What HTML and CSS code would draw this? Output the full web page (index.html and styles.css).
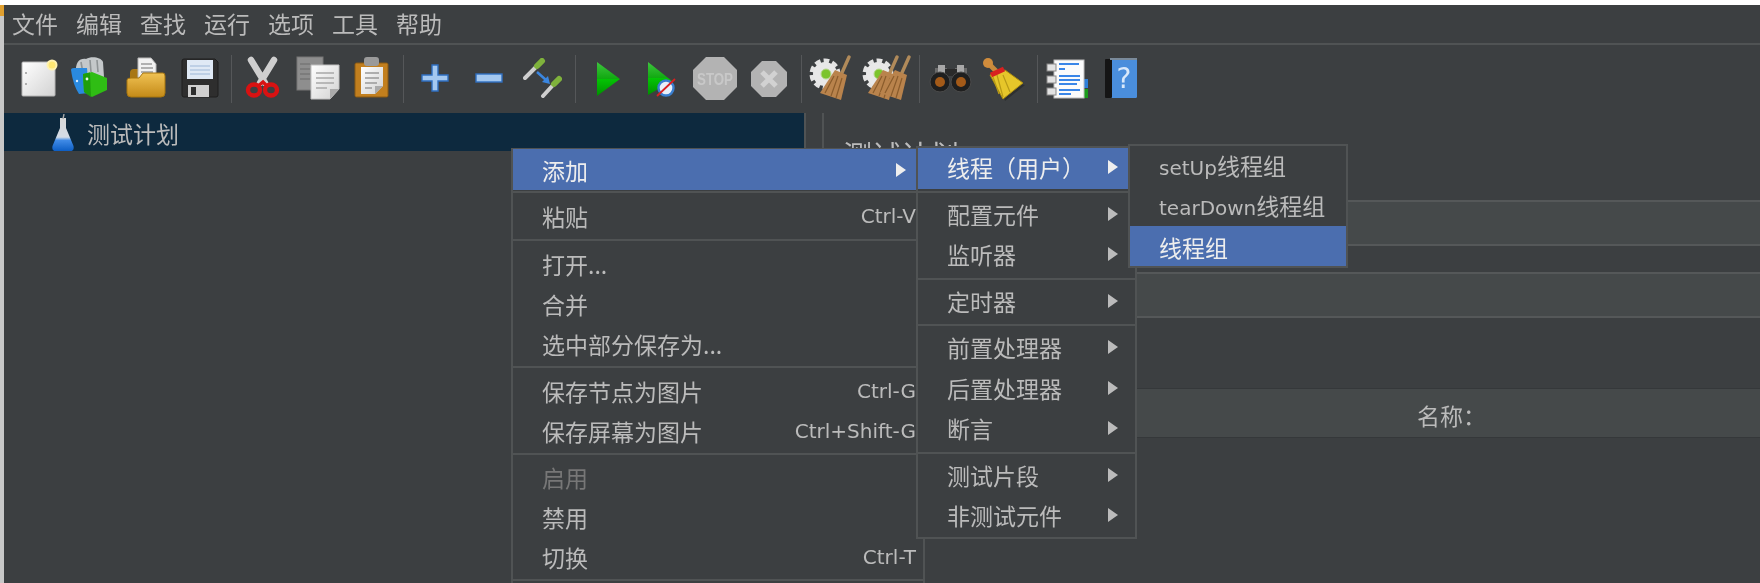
FILE: index.html
```html
<!DOCTYPE html>
<html lang="zh">
<head>
<meta charset="utf-8">
<title>JMeter</title>
<link rel="stylesheet" href="styles.css">
</head>
<body>
<svg class="defs" aria-hidden="true">
  <defs>
    <linearGradient id="paper" x1="0" y1="0" x2="1" y2="1"><stop offset="0" stop-color="#ffffff"/><stop offset="1" stop-color="#d2d2d2"/></linearGradient>
    <linearGradient id="folder" x1="0" y1="0" x2="0" y2="1"><stop offset="0" stop-color="#f0c254"/><stop offset="1" stop-color="#c48a18"/></linearGradient>
    <linearGradient id="green" x1="0" y1="0" x2="0" y2="1"><stop offset="0" stop-color="#3fc43f"/><stop offset=".5" stop-color="#0fa80f"/><stop offset=".5" stop-color="#04c404"/><stop offset="1" stop-color="#008f00"/></linearGradient>
    <linearGradient id="flask" x1="0" y1="0" x2="0" y2="1"><stop offset="0" stop-color="#d8d8d8"/><stop offset=".58" stop-color="#d4dce6"/><stop offset=".68" stop-color="#3f8ae6"/><stop offset="1" stop-color="#0d5ec4"/></linearGradient>
    <g id="gear">
      <circle cx="18" cy="19" r="13" fill="none" stroke="#e4e4e4" stroke-width="5" stroke-dasharray="5.5 3"/>
      <circle cx="18" cy="19" r="12" fill="#e8e8e8"/>
      <circle cx="19" cy="19" r="5" fill="#7cc42c" stroke="#b9d890"/>
    </g>
    <g id="besom">
      <path d="M42 2 L34 20" stroke="#b08a5a" stroke-width="3.4" stroke-linecap="round"/>
      <path d="M28 15 L40 20 L34 45 L13 38 Z" fill="#b9834c"/>
      <path d="M31 21 L24 41 M35 23 L29 43 M27 21 L18 38" stroke="#8a5c2c" stroke-width="1.2"/>
    </g>
  </defs>
</svg>
<div class="app">
  <div class="top-gap"></div>
  <div class="window">
    <div class="edge"><div class="edge-mark"></div></div>
    <div class="main">
      <nav class="menubar">
        <span>文件</span><span>编辑</span><span>查找</span><span>运行</span><span>选项</span><span>工具</span><span>帮助</span>
      </nav>
      <div class="toolbar">
        <svg class="tool" viewBox="0 0 54 48"><rect x="11" y="7" width="33" height="34" rx="1" fill="url(#paper)" stroke="#b5b5b5"/><circle cx="15" cy="18" r="1" fill="#999"/><circle cx="15" cy="29" r="1" fill="#999"/><circle cx="41" cy="10" r="4.5" fill="#ffe873" stroke="#fff2b0" stroke-width="2"/></svg>
        <svg class="tool" viewBox="0 0 54 48"><path d="M11 18 C10 7 15 3 21 4 C26 1 36 2 38 7 L39 22 L12 24 Z" fill="#c4c8ca"/><path d="M16 7 L18 18 M25 5 L26 17 M32 5 L33 17" stroke="#8f9496" stroke-width="1.6"/><path d="M6 15 Q6 13 9 13 L22 13 L24 38 L14 39 Q8 30 6 15 Z" fill="#2a8ae0"/><path d="M18 19 L27 17 L42 23 L42 35 L27 42 L19 37 Z" fill="#2fbd14"/><path d="M18 19 L25 17.5 L26 42 L19 37 Z" fill="#1f9e0c"/><circle cx="22" cy="24" r="1.4" fill="#e8f8e8"/><circle cx="12" cy="26" r="1.2" fill="#d8ecff"/></svg>
        <svg class="tool" viewBox="0 0 54 48"><path d="M11 18 Q11 14 15 14 L22 14 L22 18 L44 18 L44 30 L11 30 Z" fill="#a87716"/><path d="M19 3 L32 3 L37 9 L37 24 L19 24 Z" fill="#f1f1f1" stroke="#b8b8b8"/><path d="M22 9 H33 M22 13 H34 M22 17 H34" stroke="#9a9a9a" stroke-width="1.4"/><path d="M8 25 Q8 23 12 23 L20 23 L24 18 L44 18 Q46 18 46 21 L46 38 Q46 42 42 42 L12 42 Q8 42 8 38 Z" fill="url(#folder)" stroke="#a8760f"/></svg>
        <svg class="tool" viewBox="0 0 54 48"><path d="M9 6 Q9 4 11 4 L42 4 L45 7 L45 40 Q45 42 43 42 L11 42 Q9 42 9 40 Z" fill="#2e2e2e" stroke="#1e1e1e"/><rect x="14" y="5" width="26" height="19" fill="#dfe9f5"/><path d="M17 11 H37 M17 15 H37 M17 19 H37" stroke="#9db8d8" stroke-width="1.2"/><rect x="15" y="30" width="21" height="12" fill="#d0d0d0"/><rect x="18" y="32" width="5" height="8" fill="#2e2e2e"/></svg>
        <span class="tool-sep"></span>
        <svg class="tool" viewBox="0 0 54 48"><path d="M14 5 L28 28 M37 5 L23 28" stroke="#cfcfcf" stroke-width="6.5" stroke-linecap="round" fill="none"/><ellipse cx="17" cy="35" rx="6" ry="5.5" fill="none" stroke="#d81212" stroke-width="4.4"/><ellipse cx="34" cy="35" rx="6" ry="5.5" fill="none" stroke="#d81212" stroke-width="4.4"/><path d="M21 31 L26 27 L30 31" stroke="#d81212" stroke-width="3.4" fill="none"/></svg>
        <svg class="tool" viewBox="0 0 54 48"><rect x="6" y="2" width="26" height="33" fill="#8e8e8e" stroke="#777"/><path d="M9 9 H19 M9 14 H19 M9 19 H19 M9 24 H19" stroke="#777" stroke-width="1.4"/><path d="M20 10 L48 10 L48 34 L39 44 L20 44 Z" fill="url(#paper)" stroke="#c0c0c0"/><path d="M48 34 L39 34 L39 44 Z" fill="#aaa"/><path d="M25 18 H43 M25 23 H43 M25 28 H43 M25 33 H36" stroke="#a8a8a8" stroke-width="1.4"/></svg>
        <svg class="tool" viewBox="0 0 54 48"><rect x="10" y="8" width="33" height="34" rx="1.5" fill="#c27f1e" stroke="#8a5a12"/><rect x="19" y="2" width="15" height="9" rx="3" fill="#9a9a9a"/><path d="M16 12 H38 V31 L30 39 H16 Z" fill="url(#paper)"/><path d="M38 31 H30 V39 Z" fill="#aaa"/><path d="M20 18 H34 M20 23 H34 M20 28 H32 M20 33 H27" stroke="#999" stroke-width="1.4"/></svg>
        <span class="tool-sep"></span>
        <svg class="tool" viewBox="0 0 54 48"><path d="M23 10 H29 V20 H39 V26 H29 V36 H23 V26 H13 V20 H23 Z" fill="#a4c8f0" stroke="#2f6fc0" stroke-width="1.4"/></svg>
        <svg class="tool" viewBox="0 0 54 48"><rect x="13" y="19" width="26" height="8" fill="#a4c8f0" stroke="#2f6fc0" stroke-width="1.4"/></svg>
        <svg class="tool" viewBox="0 0 54 48"><path d="M8 23 L20 11" stroke="#cfcfcf" stroke-width="4" stroke-linecap="round"/><path d="M20 11 L25 6" stroke="#7fb23c" stroke-width="6" stroke-linecap="round"/><path d="M26 41 L37 29" stroke="#cfcfcf" stroke-width="4" stroke-linecap="round"/><path d="M37 29 L42 24" stroke="#7fb23c" stroke-width="6" stroke-linecap="round"/><path d="M20 17 L29 25" stroke="#3a86e0" stroke-width="2.4"/><path d="M33 29 L25 27 L31 21 Z" fill="#3a86e0"/></svg>
        <span class="tool-sep"></span>
        <svg class="tool" viewBox="0 0 54 48"><path d="M16 7 L39 24 L16 41 Z" fill="url(#green)"/></svg>
        <svg class="tool" viewBox="0 0 54 48"><path d="M13 7 L37 26 L13 40 Z" fill="url(#green)"/><circle cx="31" cy="33" r="7.5" fill="#e8f0fa" stroke="#3a7fd0" stroke-width="2.4"/><path d="M22 41 L40 24" stroke="#d82020" stroke-width="1.8"/></svg>
        <svg class="tool" viewBox="0 0 54 48"><path d="M17 2 H35 L48 15 V32 L35 45 H17 L4 32 V15 Z" fill="#b3b3b3"/><text class="stop-label" x="8" y="29.5" textLength="36" lengthAdjust="spacingAndGlyphs">STOP</text></svg>
        <svg class="tool" viewBox="0 0 54 48"><path d="M19 6 H33 L44 17 V31 L33 42 H19 L8 31 V17 Z" fill="#b3b3b3"/><path d="M19 17 L33 31 M33 17 L19 31" stroke="#d2d2d2" stroke-width="5"/></svg>
        <span class="tool-sep"></span>
        <svg class="tool" viewBox="0 0 54 48"><use href="#gear"/><use href="#besom"/></svg>
        <svg class="tool" viewBox="0 0 54 48"><use href="#gear" x="-1"/><use href="#besom" x="-6"/><use href="#besom" x="6"/></svg>
        <span class="tool-sep"></span>
        <svg class="tool" viewBox="0 0 54 48"><rect x="10" y="13" width="12" height="6" fill="#6b6b6b"/><rect x="30" y="13" width="12" height="6" fill="#6b6b6b"/><rect x="13" y="10" width="7" height="8" fill="#a8a8a8"/><rect x="32" y="10" width="7" height="8" fill="#a8a8a8"/><rect x="20" y="14" width="12" height="7" fill="#2a2a2a"/><circle cx="15" cy="27" r="10" fill="#1f1f1f" stroke="#4a4a4a"/><circle cx="36" cy="27" r="10" fill="#1f1f1f" stroke="#4a4a4a"/><circle cx="15" cy="27" r="5" fill="#a45a18"/><circle cx="36" cy="27" r="5" fill="#a45a18"/></svg>
        <svg class="tool" viewBox="0 0 54 48"><path d="M16 18 L23 25 L44 28 L24 44 Z" fill="#000" opacity=".25" transform="translate(2 2)"/><path d="M11 20 L26 15 L44 28 L24 44 Z" fill="#e6c62a" stroke="#a88a10"/><path d="M18 20 L24 42 M24 20 L31 37 M14 22 L20 39" stroke="#b89a18" stroke-width="1.2"/><path d="M9 8 L19 18" stroke="#c98a3c" stroke-width="5"/><circle cx="9" cy="8" r="5" fill="#d08c3c"/><path d="M12 20 L25 14" stroke="#d82020" stroke-width="5"/></svg>
        <span class="tool-sep"></span>
        <svg class="tool" viewBox="0 0 54 48"><rect x="41" y="24" width="4" height="9" fill="#2f7fd8"/><rect x="41" y="34" width="4" height="9" fill="#1c9c1c"/><rect x="11" y="5" width="30" height="38" fill="#fbfbfb" stroke="#bdbdbd"/><rect x="4" y="9" width="9" height="7" fill="#e2e2e2" stroke="#888"/><rect x="4" y="21" width="9" height="7" fill="#e2e2e2" stroke="#888"/><rect x="4" y="33" width="9" height="7" fill="#e2e2e2" stroke="#888"/><path d="M16 9 H36 M16 14 H22 M16 21 H37 M16 25 H37 M16 29 H34 M16 35 H37 M16 39 H28" stroke="#3a86e8" stroke-width="2"/></svg>
        <svg class="tool" viewBox="0 0 54 48"><rect x="13" y="3" width="27" height="40" rx="1.5" fill="#4a8edc"/><rect x="8" y="4" width="7" height="39" rx="1" fill="#151515"/><rect x="13" y="3" width="27" height="2" fill="#7a8a9a"/><text class="help-label" x="27" y="33">?</text></svg>
      </div>
      <div class="content">
        <aside class="tree">
          <div class="tree-row">
            <svg class="flask" viewBox="0 0 22 38"><path d="M8 4 L14 4 L14 14 L21.5 32 Q22.5 37 18 37 L4 37 Q-0.5 37 0.5 32 L8 14 Z" fill="url(#flask)"/><path d="M12 0 L11 5" stroke="#aaa" stroke-width="1.4"/></svg>
            <span class="tree-label">测试计划</span>
          </div>
        </aside>
        <div class="splitter"></div>
        <section class="detail">
          <h1 class="detail-title">测试计划</h1>
          <div class="band band-one"></div>
          <div class="band band-two"></div>
          <div class="table-head"><span>名称：</span></div>
        </section>
      </div>
    </div>
  </div>

  <div class="menu menu-root">
    <div class="item active first"><span>添加</span><i class="arrow"></i></div>
    <div class="sep"></div>
    <div class="item"><span>粘贴</span><span class="lat">Ctrl-V</span></div>
    <div class="sep sep-tall"></div>
    <div class="item"><span>打开...</span></div>
    <div class="item"><span>合并</span></div>
    <div class="item"><span>选中部分保存为...</span></div>
    <div class="sep"></div>
    <div class="item"><span>保存节点为图片</span><span class="lat">Ctrl-G</span></div>
    <div class="item"><span>保存屏幕为图片</span><span class="lat">Ctrl+Shift-G</span></div>
    <div class="sep sep-short"></div>
    <div class="item disabled"><span>启用</span></div>
    <div class="item"><span>禁用</span></div>
    <div class="item"><span>切换</span><span class="lat">Ctrl-T</span></div>
    <div class="sep"></div>
  </div>

  <div class="menu menu-add">
    <div class="item active"><span>线程（用户）</span><i class="arrow"></i></div>
    <div class="sep"></div>
    <div class="item"><span>配置元件</span><i class="arrow"></i></div>
    <div class="item"><span>监听器</span><i class="arrow"></i></div>
    <div class="sep"></div>
    <div class="item"><span>定时器</span><i class="arrow"></i></div>
    <div class="sep"></div>
    <div class="item"><span>前置处理器</span><i class="arrow"></i></div>
    <div class="item"><span>后置处理器</span><i class="arrow"></i></div>
    <div class="item"><span>断言</span><i class="arrow"></i></div>
    <div class="sep"></div>
    <div class="item"><span>测试片段</span><i class="arrow"></i></div>
    <div class="item"><span>非测试元件</span><i class="arrow"></i></div>
  </div>

  <div class="menu menu-thread">
    <div class="item"><span><span class="lat">setUp</span>线程组</span></div>
    <div class="item"><span><span class="lat">tearDown</span>线程组</span></div>
    <div class="item active"><span>线程组</span></div>
  </div>
</div>
</body>
</html>
```
FILE: styles.css
```css
html, body {
  margin: 0;
  height: 583px;
  overflow: hidden;
  background: #ffffff;
}

.defs {
  position: absolute;
  width: 0;
  height: 0;
}

.app {
  position: relative;
  width: 1760px;
  height: 583px;
  display: flex;
  flex-direction: column;
  overflow: hidden;
  font-family: "Noto Sans CJK SC", sans-serif;
  font-size: 23px;
  color: #bbbbbb;
  filter: blur(0.35px);
}

.top-gap {
  height: 5px;
  flex: none;
}

.window {
  flex: 1;
  display: flex;
  min-height: 0;
}

.edge {
  width: 4px;
  flex: none;
  background: #c8c8c8;
}

.edge-mark {
  height: 11px;
  background: #e0a030;
}

.main {
  flex: 1;
  min-width: 0;
  display: flex;
  flex-direction: column;
  background: #3c3f41;
}

.menubar {
  height: 36px;
  flex: none;
  display: flex;
  align-items: center;
  gap: 18px;
  padding: 0 0 2px 8px;
  border-bottom: 2px solid #505354;
  line-height: 36px;
}

.toolbar {
  height: 68px;
  flex: none;
  display: flex;
  align-items: center;
  padding-left: 7px;
}

.tool {
  width: 54px;
  height: 48px;
  flex: none;
  filter: blur(0.7px);
}

.tool-sep {
  width: 1px;
  height: 48px;
  flex: none;
  margin: 0 5px 0 4px;
  background: #555759;
}

.stop-label {
  font-family: "Liberation Sans", sans-serif;
  font-size: 16px;
  font-weight: 700;
  fill: #c8c8c8;
}

.help-label {
  font-family: "DejaVu Sans", sans-serif;
  font-size: 28px;
  fill: #d8e8fa;
  text-anchor: middle;
}

.content {
  flex: 1;
  min-height: 0;
  display: flex;
}

.tree {
  width: 800px;
  flex: none;
}

.tree-row {
  height: 38px;
  display: flex;
  align-items: center;
  gap: 13px;
  padding-left: 48px;
  background: #0d293e;
  line-height: 38px;
}

.tree-label {
  padding-top: 2px;
  line-height: 36px;
}

.flask {
  width: 22px;
  height: 38px;
  flex: none;
  margin-top: 2px;
}

.splitter {
  width: 16px;
  flex: none;
  border-left: 2px solid #505354;
}

.detail {
  flex: 1;
  min-width: 0;
  border-left: 2px solid #505354;
}

.detail-title {
  margin: 20px 0 0 19px;
  height: 42px;
  font-size: 29px;
  font-weight: 400;
  line-height: 42px;
}

.band {
  height: 42px;
  background: #45494a;
  border-top: 2px solid #555859;
  border-bottom: 2px solid #555859;
}

.band-one {
  margin-top: 25px;
}

.band-two {
  margin-top: 26px;
}

.table-head {
  margin-top: 70px;
  height: 48px;
  display: flex;
  align-items: center;
  padding-left: 593px;
  background: #45494a;
  border-top: 1px solid #35383a;
  border-bottom: 1px solid #35383a;
}

.table-head span {
  padding-top: 4px;
}

.menu {
  position: absolute;
  display: flex;
  flex-direction: column;
  box-sizing: border-box;
  background: #3c3f41;
  border: 2px solid #505354;
}

.menu-root {
  left: 511px;
  top: 148px;
  width: 414px;
  border-top-width: 1px;
  z-index: 1;
}

.menu-add {
  left: 916px;
  top: 146px;
  width: 221px;
  z-index: 2;
}

.menu-thread {
  left: 1128px;
  top: 144px;
  width: 220px;
  z-index: 3;
}

.item {
  height: 40px;
  flex: none;
  display: flex;
  align-items: center;
  justify-content: space-between;
  line-height: 36px;
  white-space: nowrap;
}

.menu-root .item {
  box-sizing: border-box;
  padding: 0 7px 3px 29px;
}

.menu-root .item.first {
  height: 41px;
  padding-top: 1px;
  padding-bottom: 0;
  padding-right: 17px;
}

.menu-add .item {
  height: 40.5px;
  box-sizing: border-box;
  padding: 0 17px 2px 29px;
}

.menu-thread .item {
  box-sizing: border-box;
  padding: 1px 8px 0 29px;
}

.item.active {
  background: #4b6eaf;
  color: #eeeeee;
}

.item.disabled {
  color: #777777;
}

.lat {
  font-family: "DejaVu Sans", sans-serif;
  font-size: 20px;
}

.sep {
  height: 2px;
  flex: none;
  margin: 1px 0 4px;
  background: #505354;
}

.sep.sep-tall {
  margin: 2px 0 4px;
}

.sep.sep-short {
  margin: 1px 0 3px;
}

.menu-add .sep {
  margin: 2px 0;
}

.arrow {
  width: 0;
  height: 0;
  flex: none;
  border-left: 10px solid #bbbbbb;
  border-top: 7.5px solid transparent;
  border-bottom: 7.5px solid transparent;
}

.active .arrow {
  border-left-color: #eeeeee;
}
```
